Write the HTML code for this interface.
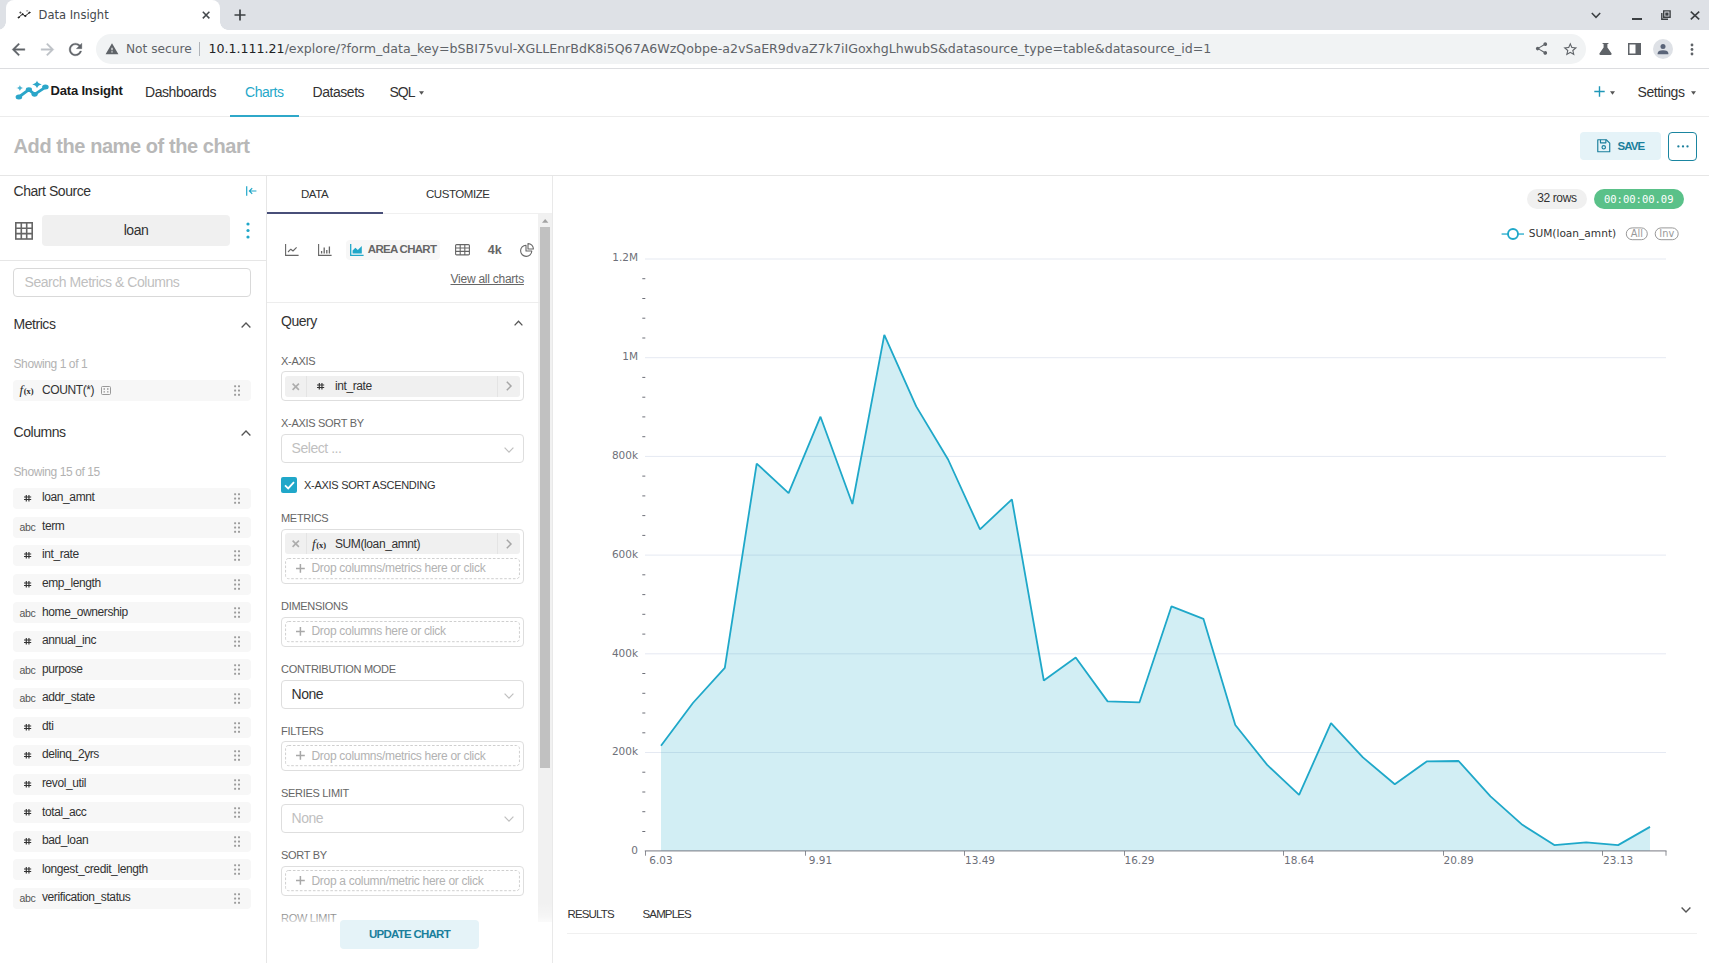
<!DOCTYPE html>
<html lang="en">
<head>
<meta charset="utf-8">
<title>Data Insight</title>
<style>
*{box-sizing:border-box;margin:0;padding:0}
html,body{width:1709px;height:963px;overflow:hidden;background:#fff}
body{position:relative;font-family:"Liberation Sans",sans-serif;color:#323232;font-size:14px}
.abs{position:absolute}
.dj{font-family:"DejaVu Sans","Liberation Sans",sans-serif}
svg{display:block;overflow:visible}
/* ---------- browser chrome ---------- */
#tabstrip{left:0;top:0;width:1709px;height:30px;background:#dee1e6}
#tab{left:6px;top:0;width:214px;height:30px;background:#fff;border-radius:8px 8px 0 0}
#tab:before,#tab:after{content:"";position:absolute;bottom:0;width:8px;height:8px}
#tab:before{left:-8px;background:radial-gradient(circle at 0 0,#dee1e6 7.5px,#fff 8px)}
#tab:after{right:-8px;background:radial-gradient(circle at 100% 0,#dee1e6 7.5px,#fff 8px)}
#toolbar{left:0;top:30px;width:1709px;height:39px;background:#fff;border-bottom:1px solid #dcdde0}
#omni{left:96px;top:34px;width:1490px;height:30px;border-radius:15px;background:#f1f3f4}
.ct{font-size:13px;white-space:nowrap;line-height:16px}
/* ---------- app nav ---------- */
#nav{left:0;top:69px;width:1709px;height:48px;border-bottom:1px solid #ececec;background:#fff}
.navi{top:84.4px;font-size:14px;line-height:16px;color:#323232;white-space:nowrap;letter-spacing:-.45px}
/* ---------- title row ---------- */
#titlerow{left:0;top:117px;width:1709px;height:59px;border-bottom:1px solid #e6e6e6;background:#fff}
/* ---------- shared text ---------- */
.t14{font-size:14px;line-height:16px;letter-spacing:-.45px;white-space:nowrap;color:#323232}
.t12{font-size:12px;line-height:14px;letter-spacing:-.4px;white-space:nowrap;color:#323232}
.up{font-size:11.5px;line-height:14px;letter-spacing:-.58px;white-space:nowrap;color:#323232}
/* ---------- left panel ---------- */
.row{left:13px;width:238.4px;height:21px;border-radius:4px;background:#f7f7f7}
.rt{left:42px}
.abc{left:19.5px;font-size:10.5px;line-height:12px;letter-spacing:-.3px;color:#555;white-space:nowrap}
/* ---------- middle panel ---------- */
.lbl{left:281px;color:#666}
.box{left:281px;width:243px;border:1px solid #dedede;border-radius:4px;background:#fff}
.chip{left:285px;width:235px;height:21.5px;border-radius:3px;background:#f0f0f0}
.drop{left:285px;width:235px;height:21px;border:1px dashed #d4d4d4;border-radius:3px}
.ph{left:311.5px;font-size:12px;line-height:14px;letter-spacing:-.3px;color:#b2b2b2;white-space:nowrap}
</style>
</head>
<body>

<!-- ===== BROWSER CHROME ===== -->
<div id="tabstrip" class="abs"></div>
<div id="tab" class="abs"></div>
<div id="toolbar" class="abs"></div>
<div id="omni" class="abs"></div>
<div class="abs dj ct" style="left:38.6px;top:7px;color:#45494d;font-size:11.5px">Data Insight</div>
<div class="abs dj ct" style="left:126px;top:41.4px;color:#5f6368;font-size:12.2px">Not secure</div>
<div class="abs" style="left:199px;top:42px;width:1px;height:14px;background:#b0b4b9"></div>
<div class="abs dj ct" style="left:208.5px;top:41.4px;color:#5f6368;font-size:12.6px"><span style="color:#202124">10.1.111.21</span>/explore/?form_data_key=bSBI75vul-XGLLEnrBdK8i5Q67A6WzQobpe-a2vSaER9dvaZ7k7iIGoxhgLhwubS&amp;datasource_type=table&amp;datasource_id=1</div>
<svg class="abs" style="left:17px;top:10px" width="14" height="10" viewBox="0 0 14 10" fill="none" stroke="#222" stroke-width="1" stroke-linecap="round" stroke-linejoin="round"><path d="M1.5 7.5 L5.5 4.2 L8.2 6 L12.5 2.6"/><circle cx="1.6" cy="7.5" r=".55" fill="#222"/><circle cx="5.5" cy="4.2" r=".55" fill="#222"/><circle cx="8.2" cy="6" r=".55" fill="#222"/><circle cx="12.4" cy="2.6" r=".55" fill="#222"/><path d="M2.6 2.6 h1.6 M3.4 1.8 v1.6 M9.6 .9 h1.2" stroke-width=".6"/></svg>
<svg class="abs" style="left:201px;top:10.2px" width="10" height="10" viewBox="0 0 10 10" stroke="#45494d" stroke-width="1.5" fill="none"><path d="M1.8 1.8 L8.4 8.4 M8.4 1.8 L1.8 8.4"/></svg>
<svg class="abs" style="left:233.6px;top:9px" width="12" height="12" viewBox="0 0 12 12" stroke="#3c4043" stroke-width="1.7" fill="none"><path d="M6 0.5 V11.5 M0.5 6 H11.5"/></svg>
<svg class="abs" style="left:9px;top:39.5px" width="19" height="19" viewBox="0 0 24 24" fill="#5f6368" stroke="#5f6368" stroke-width="0.5"><path d="M20 11H7.83l5.59-5.59L12 4l-8 8 8 8 1.41-1.41L7.83 13H20v-2z"/></svg>
<svg class="abs" style="left:37.8px;top:39.5px" width="19" height="19" viewBox="0 0 24 24" fill="#bdc1c6" stroke="#bdc1c6" stroke-width="0.5"><path d="M12 4l-1.41 1.41L16.17 11H4v2h12.17l-5.58 5.59L12 20l8-8z"/></svg>
<svg class="abs" style="left:66px;top:39.5px" width="19" height="19" viewBox="0 0 24 24" fill="#5f6368" stroke="#5f6368" stroke-width="0.4"><path d="M17.65 6.35C16.2 4.9 14.21 4 12 4c-4.42 0-7.99 3.58-7.99 8s3.57 8 7.99 8c3.73 0 6.84-2.55 7.73-6h-2.08c-.82 2.33-3.04 4-5.65 4-3.31 0-6-2.69-6-6s2.69-6 6-6c1.66 0 3.14.69 4.22 1.78L13 11h7V4l-2.35 2.35z"/></svg>
<svg class="abs" style="left:104.5px;top:42px" width="14" height="14" viewBox="0 0 24 24" fill="#5f6368" stroke="#5f6368" stroke-width="0"><path d="M1 21h22L12 2 1 21zm12-3h-2v-2h2v2zm0-4h-2v-4h2v4z"/></svg>
<svg class="abs" style="left:1533.5px;top:41.3px" width="15" height="15" viewBox="0 0 24 24" fill="#5f6368" stroke="#5f6368" stroke-width="0"><path d="M18 16.08c-.76 0-1.44.3-1.96.77L8.91 12.7c.05-.23.09-.46.09-.7s-.04-.47-.09-.7l7.05-4.11c.54.5 1.25.81 2.04.81 1.66 0 3-1.34 3-3s-1.34-3-3-3-3 1.34-3 3c0 .24.04.47.09.7L8.04 9.81C7.5 9.31 6.79 9 6 9c-1.66 0-3 1.34-3 3s1.34 3 3 3c.79 0 1.5-.31 2.04-.81l7.12 4.16c-.05.21-.08.43-.08.65 0 1.61 1.31 2.92 2.92 2.92s2.92-1.31 2.92-2.92-1.31-2.92-2.92-2.92z"/></svg>
<svg class="abs" style="left:1561.9px;top:40.6px" width="16.6" height="16.6" viewBox="0 0 24 24" fill="#5f6368" stroke="#5f6368" stroke-width="0"><path d="M22 9.24l-7.19-.62L12 2 9.19 8.63 2 9.24l5.46 4.73L5.82 21 12 17.27 18.18 21l-1.63-7.03L22 9.24zM12 15.4l-3.76 2.27 1-4.28-3.32-2.88 4.38-.38L12 6.1l1.71 4.04 4.38.38-3.32 2.88 1 4.28L12 15.4z"/></svg>
<svg class="abs" style="left:1599px;top:43px" width="13" height="12" viewBox="0 0 13 12" fill="#5f6368"><path d="M3.6 0 H9.4 V1 H8.4 V4.6 L12.6 10.6 Q13 12 11.6 12 H1.4 Q0 12 .4 10.6 L4.6 4.6 V1 H3.6 Z"/></svg>
<svg class="abs" style="left:1628px;top:43px" width="13" height="12" viewBox="0 0 13 12"><rect x=".75" y=".75" width="11.5" height="10.5" fill="none" stroke="#5f6368" stroke-width="1.5"/><rect x="7.5" y="0" width="5.5" height="12" fill="#5f6368"/></svg>
<svg class="abs" style="left:1653px;top:39px" width="20" height="20" viewBox="0 0 20 20"><circle cx="10" cy="10" r="10" fill="#dee1e6"/><circle cx="10" cy="7.4" r="2.5" fill="#5a6478"/><path d="M4.6 14.6 Q4.6 11.2 10 11.2 Q15.4 11.2 15.4 14.6 V15.2 H4.6 Z" fill="#5a6478"/></svg>
<svg class="abs" style="left:1690px;top:43px" width="4" height="13" viewBox="0 0 4 13" fill="#5f6368"><circle cx="2" cy="2" r="1.4"/><circle cx="2" cy="6.5" r="1.4"/><circle cx="2" cy="11" r="1.4"/></svg>
<svg class="abs" style="left:1591px;top:12px" width="10" height="7" viewBox="0 0 10 7" stroke="#3c4043" stroke-width="1.5" fill="none"><path d="M.8 .9 L5 5.3 L9.2 .9"/></svg>
<div class="abs" style="left:1632.3px;top:18px;width:9.5px;height:1.8px;background:#3c4043"></div>
<svg class="abs" style="left:1661px;top:10px" width="10" height="10" viewBox="0 0 10 10" stroke="#3c4043" stroke-width="1.4" fill="none"><path d="M2.7 .9 H9.1 V7.3 H2.7 Z M.8 3 V9.2 H7"/><rect x="4.3" y="2.5" width="3.2" height="3.2" fill="#3c4043" stroke="none"/></svg>
<svg class="abs" style="left:1690px;top:11px" width="10" height="9" viewBox="0 0 10 9" stroke="#3c4043" stroke-width="1.6" fill="none"><path d="M.8 .6 L9.2 8.4 M9.2 .6 L.8 8.4"/></svg>


<!-- ===== APP NAV ===== -->
<div id="nav" class="abs"></div>
<div class="abs" style="left:50.5px;top:82.5px;font-weight:bold;font-size:13px;line-height:16px;color:#1a1a1a;letter-spacing:-0.18px;white-space:nowrap">Data Insight</div>
<div class="abs navi" style="left:145px">Dashboards</div>
<div class="abs navi" style="left:245px;color:#1fa8c9">Charts</div>
<div class="abs" style="left:230px;top:115px;width:68.5px;height:2px;background:#2fa8c9"></div>
<div class="abs navi" style="left:312.5px">Datasets</div>
<div class="abs navi" style="left:389.5px;letter-spacing:-1px">SQL</div>
<div class="abs navi" style="left:1637.5px">Settings</div>
<svg class="abs" style="left:14px;top:80px" width="36" height="21" viewBox="0 0 36 21"><g stroke="#2ba6c9" stroke-width="2.8" stroke-linecap="round" stroke-linejoin="round" fill="none"><path d="M4.9 17 L14.9 9.6 L20.6 14.3 L31.6 7.1"/></g><g fill="#2ba6c9"><ellipse cx="4.9" cy="17" rx="3.3" ry="2.5"/><ellipse cx="14.9" cy="9.6" rx="3.1" ry="2.4"/><ellipse cx="20.6" cy="14.3" rx="3.1" ry="2.4"/><ellipse cx="31.4" cy="7.1" rx="3.3" ry="2.5"/><path d="M23 .6 Q23.7 3.7 27.8 4.4 Q23.7 5.1 23 8.2 Q22.3 5.1 18.2 4.4 Q22.3 3.7 23 .6Z"/><path d="M5.9 5 Q6.3 7.7 9.6 8.1 Q6.3 8.5 5.9 11.2 Q5.5 8.5 2.2 8.1 Q5.5 7.7 5.9 5Z" opacity=".85"/></g></svg>
<svg class="abs" style="left:418.5px;top:90.8px" width="5" height="4" viewBox="0 0 5 4" fill="#555"><path d="M0 .3 H5 L2.5 3.7Z"/></svg>
<svg class="abs" style="left:1609.5px;top:90.8px" width="5" height="4" viewBox="0 0 5 4" fill="#555"><path d="M0 .3 H5 L2.5 3.7Z"/></svg>
<svg class="abs" style="left:1691px;top:90.8px" width="5" height="4" viewBox="0 0 5 4" fill="#555"><path d="M0 .3 H5 L2.5 3.7Z"/></svg>
<svg class="abs" style="left:1594.2px;top:86.2px" width="11" height="11" viewBox="0 0 11 11" stroke="#1f97b8" stroke-width="1.4" fill="none"><path d="M5.5 .3 V10.7 M.3 5.5 H10.7"/></svg>


<!-- ===== TITLE ROW ===== -->
<div id="titlerow" class="abs"></div>
<div class="abs" style="left:13.6px;top:134.7px;font-size:20px;line-height:22px;font-weight:bold;color:#b8b8b8;letter-spacing:-.43px;white-space:nowrap">Add the name of the chart</div>
<div class="abs" style="left:1580px;top:132px;width:81px;height:28px;border-radius:4px;background:#e5f3f8"></div>
<svg class="abs" style="left:1596.5px;top:138.5px" width="13.5" height="13.5" viewBox="0 0 14 14" fill="none" stroke="#1a7f9c" stroke-width="1.2" stroke-linejoin="round"><path d="M.8 .8 H9.6 L13.2 4.2 V13.2 H.8 Z"/><path d="M3.6 .8 V4 H9.2 V.8"/><circle cx="7" cy="8.6" r="1.8"/></svg>
<div class="abs" style="left:1617.5px;top:139px;font-size:11.5px;line-height:14px;font-weight:bold;color:#1a7f9c;letter-spacing:-.9px;white-space:nowrap">SAVE</div>
<div class="abs" style="left:1668px;top:132px;width:29px;height:28.5px;border-radius:4px;border:1px solid #1a85a0;background:#fff"></div>
<svg class="abs" style="left:1676.5px;top:145px" width="12" height="3" viewBox="0 0 12 3" fill="#1a7f9c"><circle cx="1.4" cy="1.4" r="1.15"/><circle cx="6" cy="1.4" r="1.15"/><circle cx="10.5" cy="1.4" r="1.15"/></svg>


<!-- ===== LEFT PANEL ===== -->
<div class="abs" style="left:265.6px;top:176px;width:1px;height:787px;background:#e6e6e6"></div>
<div class="abs t14" style="left:13.5px;top:182.8px">Chart Source</div>
<svg class="abs" style="left:246px;top:186px" width="11" height="10" viewBox="0 0 11 10" fill="none" stroke="#20a7c9" stroke-width="1.2"><path d="M.7 .2 V9.8 M10.4 5 H3.4 M6.2 2.2 L3.4 5 L6.2 7.8"/></svg>
<svg class="abs" style="left:15px;top:221.5px" width="18" height="18" viewBox="0 0 18 18" fill="none" stroke="#666" stroke-width="1.6"><rect x=".8" y=".8" width="16.4" height="16.2"/><path d="M6.3 .8 V17 M11.7 .8 V17 M.8 6.2 H17.2 M.8 11.6 H17.2"/></svg>
<div class="abs" style="left:42px;top:215px;width:188px;height:31px;border-radius:4px;background:#f0f0f0"></div>
<div class="abs t14" style="left:42px;top:222px;width:188px;text-align:center">loan</div>
<svg class="abs" style="left:246px;top:221.5px" width="4" height="17" viewBox="0 0 4 17" fill="#20a7c9"><circle cx="2" cy="2" r="1.6"/><circle cx="2" cy="8.5" r="1.6"/><circle cx="2" cy="15" r="1.6"/></svg>
<div class="abs" style="left:0;top:260px;width:266px;height:1px;background:#e6e6e6"></div>
<div class="abs" style="left:13px;top:268px;width:238.4px;height:29px;border:1px solid #d9d9d9;border-radius:4px;background:#fff"></div>
<div class="abs t14" style="left:24.5px;top:274px;color:#bfbfbf">Search Metrics &amp; Columns</div>
<div class="abs t14" style="left:13.5px;top:315.8px">Metrics</div>
<svg class="abs" style="left:241px;top:321.5px" width="10" height="6" viewBox="0 0 10 6" fill="none" stroke="#555" stroke-width="1.3"><path d="M.6 5.5 L5 1 L9.4 5.5"/></svg>
<div class="abs t12" style="left:13.5px;top:356.5px;color:#b2b2b2">Showing 1 of 1</div>
<div class="abs row" style="top:379.8px"></div>
<div class="abs" style="left:19.5px;top:382.8px;font-family:'Liberation Serif',serif;font-style:italic;font-size:13px;line-height:14px;color:#2a2a2a;white-space:nowrap">f<span style="font-size:8.5px;font-style:normal;font-weight:bold;letter-spacing:0;margin-left:.6px">(x)</span></div>
<div class="abs t12 rt" style="top:382.8px">COUNT(*)</div>
<svg class="abs" style="left:101px;top:385.8px" width="10" height="9" viewBox="0 0 10 9" fill="none" stroke="#999" stroke-width="1"><rect x=".5" y=".5" width="9" height="8" rx="1"/><path d="M2.5 3 H4 M2.5 5.8 H4 M6 3 H7.5 M6 5.8 H7.5" stroke-width="1.3"/></svg>
<svg class="abs" style="left:233px;top:384.8px" width="8" height="11" viewBox="0 0 8 11" fill="#9c9c9c"><rect x="1.1" y="0.2" width="2" height="2" rx=".6"/><rect x="1.1" y="4.5" width="2" height="2" rx=".6"/><rect x="1.1" y="8.8" width="2" height="2" rx=".6"/><rect x="5.0" y="0.2" width="2" height="2" rx=".6"/><rect x="5.0" y="4.5" width="2" height="2" rx=".6"/><rect x="5.0" y="8.8" width="2" height="2" rx=".6"/></svg>
<div class="abs t14" style="left:13.5px;top:423.8px">Columns</div>
<svg class="abs" style="left:241px;top:429.5px" width="10" height="6" viewBox="0 0 10 6" fill="none" stroke="#555" stroke-width="1.3"><path d="M.6 5.5 L5 1 L9.4 5.5"/></svg>
<div class="abs t12" style="left:13.5px;top:464.6px;color:#b2b2b2">Showing 15 of 15</div>
<div class="abs row" style="top:488.0px"></div>
<svg class="abs" style="left:24.0px;top:495.2px" width="7.2" height="6.6" viewBox="0 0 7.2 6.6" fill="none" stroke="#333" stroke-width="1.15"><path d="M2.3 0 V6.6 M4.95 0 V6.6 M0 2.05 H7.2 M0 4.55 H7.2"/></svg>
<div class="abs t12 rt" style="top:490.3px">loan_amnt</div>
<svg class="abs" style="left:233px;top:493.0px" width="8" height="11" viewBox="0 0 8 11" fill="#9c9c9c"><rect x="1.1" y="0.2" width="2" height="2" rx=".6"/><rect x="1.1" y="4.5" width="2" height="2" rx=".6"/><rect x="1.1" y="8.8" width="2" height="2" rx=".6"/><rect x="5.0" y="0.2" width="2" height="2" rx=".6"/><rect x="5.0" y="4.5" width="2" height="2" rx=".6"/><rect x="5.0" y="8.8" width="2" height="2" rx=".6"/></svg>
<div class="abs row" style="top:516.6px"></div>
<div class="abs abc" style="top:520.9px">abc</div>
<div class="abs t12 rt" style="top:518.9px">term</div>
<svg class="abs" style="left:233px;top:521.6px" width="8" height="11" viewBox="0 0 8 11" fill="#9c9c9c"><rect x="1.1" y="0.2" width="2" height="2" rx=".6"/><rect x="1.1" y="4.5" width="2" height="2" rx=".6"/><rect x="1.1" y="8.8" width="2" height="2" rx=".6"/><rect x="5.0" y="0.2" width="2" height="2" rx=".6"/><rect x="5.0" y="4.5" width="2" height="2" rx=".6"/><rect x="5.0" y="8.8" width="2" height="2" rx=".6"/></svg>
<div class="abs row" style="top:545.1px"></div>
<svg class="abs" style="left:24.0px;top:552.3px" width="7.2" height="6.6" viewBox="0 0 7.2 6.6" fill="none" stroke="#333" stroke-width="1.15"><path d="M2.3 0 V6.6 M4.95 0 V6.6 M0 2.05 H7.2 M0 4.55 H7.2"/></svg>
<div class="abs t12 rt" style="top:547.4px">int_rate</div>
<svg class="abs" style="left:233px;top:550.1px" width="8" height="11" viewBox="0 0 8 11" fill="#9c9c9c"><rect x="1.1" y="0.2" width="2" height="2" rx=".6"/><rect x="1.1" y="4.5" width="2" height="2" rx=".6"/><rect x="1.1" y="8.8" width="2" height="2" rx=".6"/><rect x="5.0" y="0.2" width="2" height="2" rx=".6"/><rect x="5.0" y="4.5" width="2" height="2" rx=".6"/><rect x="5.0" y="8.8" width="2" height="2" rx=".6"/></svg>
<div class="abs row" style="top:573.7px"></div>
<svg class="abs" style="left:24.0px;top:580.9px" width="7.2" height="6.6" viewBox="0 0 7.2 6.6" fill="none" stroke="#333" stroke-width="1.15"><path d="M2.3 0 V6.6 M4.95 0 V6.6 M0 2.05 H7.2 M0 4.55 H7.2"/></svg>
<div class="abs t12 rt" style="top:576.0px">emp_length</div>
<svg class="abs" style="left:233px;top:578.7px" width="8" height="11" viewBox="0 0 8 11" fill="#9c9c9c"><rect x="1.1" y="0.2" width="2" height="2" rx=".6"/><rect x="1.1" y="4.5" width="2" height="2" rx=".6"/><rect x="1.1" y="8.8" width="2" height="2" rx=".6"/><rect x="5.0" y="0.2" width="2" height="2" rx=".6"/><rect x="5.0" y="4.5" width="2" height="2" rx=".6"/><rect x="5.0" y="8.8" width="2" height="2" rx=".6"/></svg>
<div class="abs row" style="top:602.2px"></div>
<div class="abs abc" style="top:606.5px">abc</div>
<div class="abs t12 rt" style="top:604.5px">home_ownership</div>
<svg class="abs" style="left:233px;top:607.2px" width="8" height="11" viewBox="0 0 8 11" fill="#9c9c9c"><rect x="1.1" y="0.2" width="2" height="2" rx=".6"/><rect x="1.1" y="4.5" width="2" height="2" rx=".6"/><rect x="1.1" y="8.8" width="2" height="2" rx=".6"/><rect x="5.0" y="0.2" width="2" height="2" rx=".6"/><rect x="5.0" y="4.5" width="2" height="2" rx=".6"/><rect x="5.0" y="8.8" width="2" height="2" rx=".6"/></svg>
<div class="abs row" style="top:630.8px"></div>
<svg class="abs" style="left:24.0px;top:638.0px" width="7.2" height="6.6" viewBox="0 0 7.2 6.6" fill="none" stroke="#333" stroke-width="1.15"><path d="M2.3 0 V6.6 M4.95 0 V6.6 M0 2.05 H7.2 M0 4.55 H7.2"/></svg>
<div class="abs t12 rt" style="top:633.1px">annual_inc</div>
<svg class="abs" style="left:233px;top:635.8px" width="8" height="11" viewBox="0 0 8 11" fill="#9c9c9c"><rect x="1.1" y="0.2" width="2" height="2" rx=".6"/><rect x="1.1" y="4.5" width="2" height="2" rx=".6"/><rect x="1.1" y="8.8" width="2" height="2" rx=".6"/><rect x="5.0" y="0.2" width="2" height="2" rx=".6"/><rect x="5.0" y="4.5" width="2" height="2" rx=".6"/><rect x="5.0" y="8.8" width="2" height="2" rx=".6"/></svg>
<div class="abs row" style="top:659.4px"></div>
<div class="abs abc" style="top:663.7px">abc</div>
<div class="abs t12 rt" style="top:661.7px">purpose</div>
<svg class="abs" style="left:233px;top:664.4px" width="8" height="11" viewBox="0 0 8 11" fill="#9c9c9c"><rect x="1.1" y="0.2" width="2" height="2" rx=".6"/><rect x="1.1" y="4.5" width="2" height="2" rx=".6"/><rect x="1.1" y="8.8" width="2" height="2" rx=".6"/><rect x="5.0" y="0.2" width="2" height="2" rx=".6"/><rect x="5.0" y="4.5" width="2" height="2" rx=".6"/><rect x="5.0" y="8.8" width="2" height="2" rx=".6"/></svg>
<div class="abs row" style="top:687.9px"></div>
<div class="abs abc" style="top:692.2px">abc</div>
<div class="abs t12 rt" style="top:690.2px">addr_state</div>
<svg class="abs" style="left:233px;top:692.9px" width="8" height="11" viewBox="0 0 8 11" fill="#9c9c9c"><rect x="1.1" y="0.2" width="2" height="2" rx=".6"/><rect x="1.1" y="4.5" width="2" height="2" rx=".6"/><rect x="1.1" y="8.8" width="2" height="2" rx=".6"/><rect x="5.0" y="0.2" width="2" height="2" rx=".6"/><rect x="5.0" y="4.5" width="2" height="2" rx=".6"/><rect x="5.0" y="8.8" width="2" height="2" rx=".6"/></svg>
<div class="abs row" style="top:716.5px"></div>
<svg class="abs" style="left:24.0px;top:723.7px" width="7.2" height="6.6" viewBox="0 0 7.2 6.6" fill="none" stroke="#333" stroke-width="1.15"><path d="M2.3 0 V6.6 M4.95 0 V6.6 M0 2.05 H7.2 M0 4.55 H7.2"/></svg>
<div class="abs t12 rt" style="top:718.8px">dti</div>
<svg class="abs" style="left:233px;top:721.5px" width="8" height="11" viewBox="0 0 8 11" fill="#9c9c9c"><rect x="1.1" y="0.2" width="2" height="2" rx=".6"/><rect x="1.1" y="4.5" width="2" height="2" rx=".6"/><rect x="1.1" y="8.8" width="2" height="2" rx=".6"/><rect x="5.0" y="0.2" width="2" height="2" rx=".6"/><rect x="5.0" y="4.5" width="2" height="2" rx=".6"/><rect x="5.0" y="8.8" width="2" height="2" rx=".6"/></svg>
<div class="abs row" style="top:745.0px"></div>
<svg class="abs" style="left:24.0px;top:752.2px" width="7.2" height="6.6" viewBox="0 0 7.2 6.6" fill="none" stroke="#333" stroke-width="1.15"><path d="M2.3 0 V6.6 M4.95 0 V6.6 M0 2.05 H7.2 M0 4.55 H7.2"/></svg>
<div class="abs t12 rt" style="top:747.3px">delinq_2yrs</div>
<svg class="abs" style="left:233px;top:750.0px" width="8" height="11" viewBox="0 0 8 11" fill="#9c9c9c"><rect x="1.1" y="0.2" width="2" height="2" rx=".6"/><rect x="1.1" y="4.5" width="2" height="2" rx=".6"/><rect x="1.1" y="8.8" width="2" height="2" rx=".6"/><rect x="5.0" y="0.2" width="2" height="2" rx=".6"/><rect x="5.0" y="4.5" width="2" height="2" rx=".6"/><rect x="5.0" y="8.8" width="2" height="2" rx=".6"/></svg>
<div class="abs row" style="top:773.6px"></div>
<svg class="abs" style="left:24.0px;top:780.8px" width="7.2" height="6.6" viewBox="0 0 7.2 6.6" fill="none" stroke="#333" stroke-width="1.15"><path d="M2.3 0 V6.6 M4.95 0 V6.6 M0 2.05 H7.2 M0 4.55 H7.2"/></svg>
<div class="abs t12 rt" style="top:775.9px">revol_util</div>
<svg class="abs" style="left:233px;top:778.6px" width="8" height="11" viewBox="0 0 8 11" fill="#9c9c9c"><rect x="1.1" y="0.2" width="2" height="2" rx=".6"/><rect x="1.1" y="4.5" width="2" height="2" rx=".6"/><rect x="1.1" y="8.8" width="2" height="2" rx=".6"/><rect x="5.0" y="0.2" width="2" height="2" rx=".6"/><rect x="5.0" y="4.5" width="2" height="2" rx=".6"/><rect x="5.0" y="8.8" width="2" height="2" rx=".6"/></svg>
<div class="abs row" style="top:802.2px"></div>
<svg class="abs" style="left:24.0px;top:809.4px" width="7.2" height="6.6" viewBox="0 0 7.2 6.6" fill="none" stroke="#333" stroke-width="1.15"><path d="M2.3 0 V6.6 M4.95 0 V6.6 M0 2.05 H7.2 M0 4.55 H7.2"/></svg>
<div class="abs t12 rt" style="top:804.5px">total_acc</div>
<svg class="abs" style="left:233px;top:807.2px" width="8" height="11" viewBox="0 0 8 11" fill="#9c9c9c"><rect x="1.1" y="0.2" width="2" height="2" rx=".6"/><rect x="1.1" y="4.5" width="2" height="2" rx=".6"/><rect x="1.1" y="8.8" width="2" height="2" rx=".6"/><rect x="5.0" y="0.2" width="2" height="2" rx=".6"/><rect x="5.0" y="4.5" width="2" height="2" rx=".6"/><rect x="5.0" y="8.8" width="2" height="2" rx=".6"/></svg>
<div class="abs row" style="top:830.7px"></div>
<svg class="abs" style="left:24.0px;top:837.9px" width="7.2" height="6.6" viewBox="0 0 7.2 6.6" fill="none" stroke="#333" stroke-width="1.15"><path d="M2.3 0 V6.6 M4.95 0 V6.6 M0 2.05 H7.2 M0 4.55 H7.2"/></svg>
<div class="abs t12 rt" style="top:833.0px">bad_loan</div>
<svg class="abs" style="left:233px;top:835.7px" width="8" height="11" viewBox="0 0 8 11" fill="#9c9c9c"><rect x="1.1" y="0.2" width="2" height="2" rx=".6"/><rect x="1.1" y="4.5" width="2" height="2" rx=".6"/><rect x="1.1" y="8.8" width="2" height="2" rx=".6"/><rect x="5.0" y="0.2" width="2" height="2" rx=".6"/><rect x="5.0" y="4.5" width="2" height="2" rx=".6"/><rect x="5.0" y="8.8" width="2" height="2" rx=".6"/></svg>
<div class="abs row" style="top:859.3px"></div>
<svg class="abs" style="left:24.0px;top:866.5px" width="7.2" height="6.6" viewBox="0 0 7.2 6.6" fill="none" stroke="#333" stroke-width="1.15"><path d="M2.3 0 V6.6 M4.95 0 V6.6 M0 2.05 H7.2 M0 4.55 H7.2"/></svg>
<div class="abs t12 rt" style="top:861.6px">longest_credit_length</div>
<svg class="abs" style="left:233px;top:864.3px" width="8" height="11" viewBox="0 0 8 11" fill="#9c9c9c"><rect x="1.1" y="0.2" width="2" height="2" rx=".6"/><rect x="1.1" y="4.5" width="2" height="2" rx=".6"/><rect x="1.1" y="8.8" width="2" height="2" rx=".6"/><rect x="5.0" y="0.2" width="2" height="2" rx=".6"/><rect x="5.0" y="4.5" width="2" height="2" rx=".6"/><rect x="5.0" y="8.8" width="2" height="2" rx=".6"/></svg>
<div class="abs row" style="top:887.8px"></div>
<div class="abs abc" style="top:892.1px">abc</div>
<div class="abs t12 rt" style="top:890.1px">verification_status</div>
<svg class="abs" style="left:233px;top:892.8px" width="8" height="11" viewBox="0 0 8 11" fill="#9c9c9c"><rect x="1.1" y="0.2" width="2" height="2" rx=".6"/><rect x="1.1" y="4.5" width="2" height="2" rx=".6"/><rect x="1.1" y="8.8" width="2" height="2" rx=".6"/><rect x="5.0" y="0.2" width="2" height="2" rx=".6"/><rect x="5.0" y="4.5" width="2" height="2" rx=".6"/><rect x="5.0" y="8.8" width="2" height="2" rx=".6"/></svg>


<!-- ===== MIDDLE PANEL ===== -->
<div class="abs" style="left:267px;top:213px;width:285px;height:1px;background:#f0f0f0"></div>
<div class="abs" style="left:266.6px;top:212px;width:116px;height:2px;background:#484f79"></div>
<div class="abs up" style="left:301px;top:187.2px;font-size:11.5px;letter-spacing:-.45px">DATA</div>
<div class="abs up" style="left:426px;top:187.2px;font-size:11.5px;letter-spacing:-.45px">CUSTOMIZE</div>
<div class="abs" style="left:552px;top:176px;width:1px;height:787px;background:#e9e9e9"></div>
<div class="abs" style="left:538.3px;top:213.5px;width:13.7px;height:708.5px;background:#f1f1f1"></div>
<div class="abs" style="left:540px;top:227px;width:10px;height:541px;background:#c1c1c1"></div>
<svg class="abs" style="left:541.9px;top:219.2px" width="6.4" height="3.8" viewBox="0 0 7 4" fill="#a3a3a3"><path d="M0 4 L3.5 0 L7 4Z"/></svg>
<svg class="abs" style="left:284.5px;top:243.5px" width="14" height="12" viewBox="0 0 14 12" fill="none" stroke="#666" stroke-width="1.1"><path d="M.6 0 V11.4 H13.6"/><path d="M3 8 L5.8 5.2 L8 7 L11.6 3.4" stroke-linejoin="round"/></svg>
<svg class="abs" style="left:317.5px;top:243.5px" width="14" height="12" viewBox="0 0 14 12" fill="none" stroke="#666" stroke-width="1.1"><path d="M.6 0 V11.4 H13.6"/><path d="M3.6 9.6 V7 M6.2 9.6 V3.6 M8.8 9.6 V6 M11.4 9.6 V2.4" stroke-width="1.3"/></svg>
<div class="abs" style="left:346px;top:239.5px;width:94px;height:20.5px;border-radius:4px;background:#f7f7f7"></div>
<svg class="abs" style="left:349.5px;top:243.5px" width="14" height="12" viewBox="0 0 14 12"><path d="M.7 0 V11.3 H13.6" fill="none" stroke="#20a7c9" stroke-width="1.3"/><path d="M2.6 9.6 V6.6 L5.4 3.8 L7.8 6 L11.8 2 V9.6 Z" fill="#20a7c9"/></svg>
<div class="abs" style="left:367.8px;top:241.5px;font-size:11.5px;line-height:14px;font-weight:bold;color:#666;letter-spacing:-.72px;white-space:nowrap">AREA CHART</div>
<svg class="abs" style="left:454.5px;top:244px" width="15" height="11.5" viewBox="0 0 15 11.5" fill="none" stroke="#666" stroke-width="1.1"><rect x=".6" y=".6" width="13.8" height="10.3" rx="1"/><path d="M.6 4 H14.4 M.6 7.4 H14.4 M5.2 .6 V10.9 M9.8 .6 V10.9"/></svg>
<div class="abs" style="left:487.8px;top:243.3px;font-size:12.5px;line-height:14px;font-weight:bold;color:#666;letter-spacing:-.1px;white-space:nowrap">4k</div>
<svg class="abs" style="left:520px;top:242.5px" width="14" height="14" viewBox="0 0 14 14" fill="none" stroke="#666" stroke-width="1.1"><path d="M6 2.2 A5.6 5.6 0 1 0 11.8 8 H6 Z" stroke-linejoin="round"/><path d="M8 .6 A5.4 5.4 0 0 1 13.4 6 H8 Z" stroke-linejoin="round"/></svg>
<div class="abs t12" style="left:450.5px;top:272px;color:#666;text-decoration:underline;letter-spacing:-.25px">View all charts</div>
<div class="abs" style="left:267px;top:302px;width:272.6px;height:1px;background:#ededed"></div>
<div class="abs t14" style="left:281px;top:313px">Query</div>
<svg class="abs" style="left:513.5px;top:320px" width="9" height="6" viewBox="0 0 9 6" fill="none" stroke="#555" stroke-width="1.3"><path d="M.6 5.4 L4.5 1.2 L8.4 5.4"/></svg>
<div class="abs up lbl" style="top:354.35px;font-size:11px;letter-spacing:-.3px">X-AXIS</div>
<div class="abs box" style="top:371.3px;height:29.4px"></div>
<div class="abs chip" style="top:375.6px;height:21px"></div>
<svg class="abs" style="left:292px;top:382.5px" width="7.5" height="7.5" viewBox="0 0 7.5 7.5" stroke="#adadad" stroke-width="1.6" fill="none"><path d="M.6 .6 L6.9 6.9 M6.9 .6 L.6 6.9"/></svg>
<div class="abs" style="left:306px;top:375.6px;width:1px;height:21px;background:#e4e4e4"></div>
<div class="abs" style="left:497px;top:375.6px;width:1px;height:21px;background:#e4e4e4"></div>
<svg class="abs" style="left:505.5px;top:381.2px" width="6" height="10" viewBox="0 0 6 10" stroke="#a6a6a6" stroke-width="1.5" fill="none"><path d="M.8 .8 L5 5 L.8 9.2"/></svg>
<svg class="abs" style="left:317.2px;top:382.9px" width="7.2" height="6.6" viewBox="0 0 7.2 6.6" fill="none" stroke="#333" stroke-width="1.15"><path d="M2.3 0 V6.6 M4.95 0 V6.6 M0 2.05 H7.2 M0 4.55 H7.2"/></svg>
<div class="abs t12" style="left:335px;top:378.9px">int_rate</div>
<div class="abs up lbl" style="top:416.35px;font-size:11px;letter-spacing:-.3px">X-AXIS SORT BY</div>
<div class="abs box" style="top:434px;height:29px"></div>
<div class="abs t14" style="left:291.5px;top:440px;color:#bfbfbf">Select ...</div>
<svg class="abs" style="left:503.5px;top:446.5px" width="10" height="6" viewBox="0 0 10 6" fill="none" stroke="#bfbfbf" stroke-width="1.2"><path d="M.6 .6 L5 5.2 L9.4 .6"/></svg>
<div class="abs" style="left:281px;top:477px;width:16px;height:16px;border-radius:2px;background:#20a7c9"></div>
<svg class="abs" style="left:283.5px;top:480.5px" width="11" height="9" viewBox="0 0 11 9" fill="none" stroke="#fff" stroke-width="1.8"><path d="M1 4.4 L4.2 7.4 L10 1.2"/></svg>
<div class="abs up" style="left:304px;top:478.4px;font-size:11px;letter-spacing:-.28px">X-AXIS SORT ASCENDING</div>
<div class="abs up lbl" style="top:511.35px;font-size:11px;letter-spacing:-.3px">METRICS</div>
<div class="abs box" style="top:529.2px;height:54.4px"></div>
<div class="abs chip" style="top:533.3px;height:21px"></div>
<svg class="abs" style="left:292px;top:540.2px" width="7.5" height="7.5" viewBox="0 0 7.5 7.5" stroke="#adadad" stroke-width="1.6" fill="none"><path d="M.6 .6 L6.9 6.9 M6.9 .6 L.6 6.9"/></svg>
<div class="abs" style="left:306px;top:533.3px;width:1px;height:21px;background:#e4e4e4"></div>
<div class="abs" style="left:497px;top:533.3px;width:1px;height:21px;background:#e4e4e4"></div>
<svg class="abs" style="left:505.5px;top:538.9px" width="6" height="10" viewBox="0 0 6 10" stroke="#a6a6a6" stroke-width="1.5" fill="none"><path d="M.8 .8 L5 5 L.8 9.2"/></svg>
<div class="abs" style="left:312px;top:536.5px;font-family:'Liberation Serif',serif;font-style:italic;font-size:13px;line-height:14px;color:#2a2a2a;white-space:nowrap">f<span style="font-size:8.5px;font-style:normal;font-weight:bold;letter-spacing:0;margin-left:.6px">(x)</span></div>
<div class="abs t12" style="left:335px;top:536.6px">SUM(loan_amnt)</div>
<svg class="abs" style="left:285px;top:558.2px" width="235" height="21.2" viewBox="0 0 235 21.2" fill="none"><rect x=".5" y=".5" width="234" height="20.2" rx="3" stroke="#cfcfcf" stroke-width="1" stroke-dasharray="2.6 1.75"/></svg>
<svg class="abs" style="left:295.8px;top:563.9px" width="8.8" height="8.8" viewBox="0 0 8.8 8.8" stroke="#a8a8a8" stroke-width="1.5" fill="none"><path d="M4.4 0 V8.8 M0 4.4 H8.8"/></svg>
<div class="abs ph" style="top:561.4px">Drop columns/metrics here or click</div>
<div class="abs up lbl" style="top:599.35px;font-size:11px;letter-spacing:-.3px">DIMENSIONS</div>
<div class="abs box" style="top:617.3px;height:29.6px"></div>
<svg class="abs" style="left:285px;top:621.2px" width="235" height="21.2" viewBox="0 0 235 21.2" fill="none"><rect x=".5" y=".5" width="234" height="20.2" rx="3" stroke="#cfcfcf" stroke-width="1" stroke-dasharray="2.6 1.75"/></svg>
<svg class="abs" style="left:295.8px;top:626.9px" width="8.8" height="8.8" viewBox="0 0 8.8 8.8" stroke="#a8a8a8" stroke-width="1.5" fill="none"><path d="M4.4 0 V8.8 M0 4.4 H8.8"/></svg>
<div class="abs ph" style="top:624.4px">Drop columns here or click</div>
<div class="abs up lbl" style="top:662.35px;font-size:11px;letter-spacing:-.3px">CONTRIBUTION MODE</div>
<div class="abs box" style="top:680px;height:29px"></div>
<div class="abs t14" style="left:291.5px;top:686px">None</div>
<svg class="abs" style="left:503.5px;top:692.5px" width="10" height="6" viewBox="0 0 10 6" fill="none" stroke="#bfbfbf" stroke-width="1.2"><path d="M.6 .6 L5 5.2 L9.4 .6"/></svg>
<div class="abs up lbl" style="top:724.35px;font-size:11px;letter-spacing:-.3px">FILTERS</div>
<div class="abs box" style="top:741.3px;height:29.6px"></div>
<svg class="abs" style="left:285px;top:745.2px" width="235" height="21.2" viewBox="0 0 235 21.2" fill="none"><rect x=".5" y=".5" width="234" height="20.2" rx="3" stroke="#cfcfcf" stroke-width="1" stroke-dasharray="2.6 1.75"/></svg>
<svg class="abs" style="left:295.8px;top:750.9px" width="8.8" height="8.8" viewBox="0 0 8.8 8.8" stroke="#a8a8a8" stroke-width="1.5" fill="none"><path d="M4.4 0 V8.8 M0 4.4 H8.8"/></svg>
<div class="abs ph" style="top:749.2px">Drop columns/metrics here or click</div>
<div class="abs up lbl" style="top:785.95px;font-size:11px;letter-spacing:-.3px">SERIES LIMIT</div>
<div class="abs box" style="top:803.7px;height:29px"></div>
<div class="abs t14" style="left:291.5px;top:809.6px;color:#bfbfbf">None</div>
<svg class="abs" style="left:503.5px;top:816.0px" width="10" height="6" viewBox="0 0 10 6" fill="none" stroke="#bfbfbf" stroke-width="1.2"><path d="M.6 .6 L5 5.2 L9.4 .6"/></svg>
<div class="abs up lbl" style="top:847.85px;font-size:11px;letter-spacing:-.3px">SORT BY</div>
<div class="abs box" style="top:866.3px;height:29.6px"></div>
<svg class="abs" style="left:285px;top:870.2px" width="235" height="21.2" viewBox="0 0 235 21.2" fill="none"><rect x=".5" y=".5" width="234" height="20.2" rx="3" stroke="#cfcfcf" stroke-width="1" stroke-dasharray="2.6 1.75"/></svg>
<svg class="abs" style="left:295.8px;top:875.9px" width="8.8" height="8.8" viewBox="0 0 8.8 8.8" stroke="#a8a8a8" stroke-width="1.5" fill="none"><path d="M4.4 0 V8.8 M0 4.4 H8.8"/></svg>
<div class="abs ph" style="top:874.4px">Drop a column/metric here or click</div>
<div class="abs up lbl" style="top:910.65px;font-size:11px;letter-spacing:-.3px">ROW LIMIT</div>
<div class="abs" style="left:267px;top:903px;width:285px;height:19.5px;background:linear-gradient(rgba(255,255,255,0),rgba(255,255,255,.3) 60%,rgba(255,255,255,.75))"></div>
<div class="abs" style="left:267px;top:922.5px;width:285px;height:40.5px;background:#fff"></div>
<div class="abs" style="left:340px;top:920.3px;width:139px;height:28.3px;border-radius:4px;background:#e5f3f8"></div>
<div class="abs" style="left:340px;top:927.2px;width:139px;text-align:center;font-size:11.5px;line-height:14px;font-weight:bold;color:#1a7f9c;letter-spacing:-.75px;white-space:nowrap">UPDATE CHART</div>


<!-- ===== CHART PANEL ===== -->
<div class="abs" style="left:1526.8px;top:189px;width:60.2px;height:19.5px;border-radius:10px;background:#f0f0f0"></div>
<div class="abs t12" style="left:1526.8px;top:191.3px;width:60.2px;text-align:center">32 rows</div>
<div class="abs" style="left:1594px;top:189px;width:89.5px;height:19.5px;border-radius:10px;background:#5ac189"></div>
<div class="abs" style="left:1594px;top:191.6px;width:89.5px;text-align:center;font-family:'DejaVu Sans Mono','Liberation Mono',monospace;font-size:10.5px;line-height:14px;color:#fff;white-space:nowrap">00:00:00.09</div>
<svg id="chart" class="abs" style="left:0;top:0" width="1709" height="963" viewBox="0 0 1709 963" font-family="DejaVu Sans, Liberation Sans, sans-serif">
<rect x="645" y="258.5" width="1021" height="1" fill="#e5e9f2"/>
<rect x="645" y="357.2" width="1021" height="1" fill="#e5e9f2"/>
<rect x="645" y="455.9" width="1021" height="1" fill="#e5e9f2"/>
<rect x="645" y="554.6" width="1021" height="1" fill="#e5e9f2"/>
<rect x="645" y="653.3" width="1021" height="1" fill="#e5e9f2"/>
<rect x="645" y="752.0" width="1021" height="1" fill="#e5e9f2"/>
<rect x="642.3" y="831.0" width="3" height="1" fill="#6e7079"/>
<rect x="642.3" y="811.2" width="3" height="1" fill="#6e7079"/>
<rect x="642.3" y="791.5" width="3" height="1" fill="#6e7079"/>
<rect x="642.3" y="771.7" width="3" height="1" fill="#6e7079"/>
<rect x="642.3" y="732.3" width="3" height="1" fill="#6e7079"/>
<rect x="642.3" y="712.5" width="3" height="1" fill="#6e7079"/>
<rect x="642.3" y="692.8" width="3" height="1" fill="#6e7079"/>
<rect x="642.3" y="673.0" width="3" height="1" fill="#6e7079"/>
<rect x="642.3" y="633.6" width="3" height="1" fill="#6e7079"/>
<rect x="642.3" y="613.8" width="3" height="1" fill="#6e7079"/>
<rect x="642.3" y="594.1" width="3" height="1" fill="#6e7079"/>
<rect x="642.3" y="574.3" width="3" height="1" fill="#6e7079"/>
<rect x="642.3" y="534.9" width="3" height="1" fill="#6e7079"/>
<rect x="642.3" y="515.1" width="3" height="1" fill="#6e7079"/>
<rect x="642.3" y="495.4" width="3" height="1" fill="#6e7079"/>
<rect x="642.3" y="475.6" width="3" height="1" fill="#6e7079"/>
<rect x="642.3" y="436.2" width="3" height="1" fill="#6e7079"/>
<rect x="642.3" y="416.4" width="3" height="1" fill="#6e7079"/>
<rect x="642.3" y="396.7" width="3" height="1" fill="#6e7079"/>
<rect x="642.3" y="376.9" width="3" height="1" fill="#6e7079"/>
<rect x="642.3" y="337.5" width="3" height="1" fill="#6e7079"/>
<rect x="642.3" y="317.7" width="3" height="1" fill="#6e7079"/>
<rect x="642.3" y="298.0" width="3" height="1" fill="#6e7079"/>
<rect x="642.3" y="278.2" width="3" height="1" fill="#6e7079"/>
<polygon points="661.0,850.9 661.0,745.8 692.9,703.0 724.8,667.8 756.7,463.6 788.6,493.1 820.5,416.7 852.4,504.0 884.3,334.8 916.2,406.4 948.1,459.5 980.0,529.4 1011.9,499.3 1043.8,680.5 1075.7,657.5 1107.6,701.4 1139.5,702.3 1171.5,606.3 1203.4,618.8 1235.3,725.0 1267.2,764.9 1299.1,794.9 1331.0,723.2 1362.9,757.4 1394.8,784.2 1426.7,761.4 1458.6,761.0 1490.5,796.3 1522.4,824.8 1554.3,845.1 1586.2,842.3 1618.1,845.1 1650.0,826.9 1650.0,850.9" fill="#1fa8c9" fill-opacity=".2"/>
<polyline points="661.0,745.8 692.9,703.0 724.8,667.8 756.7,463.6 788.6,493.1 820.5,416.7 852.4,504.0 884.3,334.8 916.2,406.4 948.1,459.5 980.0,529.4 1011.9,499.3 1043.8,680.5 1075.7,657.5 1107.6,701.4 1139.5,702.3 1171.5,606.3 1203.4,618.8 1235.3,725.0 1267.2,764.9 1299.1,794.9 1331.0,723.2 1362.9,757.4 1394.8,784.2 1426.7,761.4 1458.6,761.0 1490.5,796.3 1522.4,824.8 1554.3,845.1 1586.2,842.3 1618.1,845.1 1650.0,826.9" fill="none" stroke="#1fa8c9" stroke-width="1.8" stroke-linejoin="bevel"/>
<rect x="644.8" y="850.35" width="1021.7" height="1.1" fill="#6e7079" fill-opacity=".85"/>
<rect x="645" y="851" width="1" height="4.7" fill="#6e7079" fill-opacity=".8"/>
<rect x="805" y="851" width="1" height="4.7" fill="#6e7079" fill-opacity=".8"/>
<rect x="964" y="851" width="1" height="4.7" fill="#6e7079" fill-opacity=".8"/>
<rect x="1124" y="851" width="1" height="4.7" fill="#6e7079" fill-opacity=".8"/>
<rect x="1283" y="851" width="1" height="4.7" fill="#6e7079" fill-opacity=".8"/>
<rect x="1443" y="851" width="1" height="4.7" fill="#6e7079" fill-opacity=".8"/>
<rect x="1602" y="851" width="1" height="4.7" fill="#6e7079" fill-opacity=".8"/>
<rect x="1665.5" y="851" width="1" height="4.7" fill="#6e7079" fill-opacity=".8"/>
<text x="638" y="261.1" text-anchor="end" font-size="10.5" fill="#6e7079">1.2M</text>
<text x="638" y="360.0" text-anchor="end" font-size="10.5" fill="#6e7079">1M</text>
<text x="638" y="458.8" text-anchor="end" font-size="10.5" fill="#6e7079">800k</text>
<text x="638" y="557.6" text-anchor="end" font-size="10.5" fill="#6e7079">600k</text>
<text x="638" y="656.5" text-anchor="end" font-size="10.5" fill="#6e7079">400k</text>
<text x="638" y="755.4" text-anchor="end" font-size="10.5" fill="#6e7079">200k</text>
<text x="638" y="854.2" text-anchor="end" font-size="10.5" fill="#6e7079">0</text>
<text x="661.0" y="864" text-anchor="middle" font-size="10.5" fill="#6e7079">6.03</text>
<text x="820.5" y="864" text-anchor="middle" font-size="10.5" fill="#6e7079">9.91</text>
<text x="980.0" y="864" text-anchor="middle" font-size="10.5" fill="#6e7079">13.49</text>
<text x="1139.5" y="864" text-anchor="middle" font-size="10.5" fill="#6e7079">16.29</text>
<text x="1299.1" y="864" text-anchor="middle" font-size="10.5" fill="#6e7079">18.64</text>
<text x="1458.6" y="864" text-anchor="middle" font-size="10.5" fill="#6e7079">20.89</text>
<text x="1618.1" y="864" text-anchor="middle" font-size="10.5" fill="#6e7079">23.13</text>
<rect x="1501.6" y="233.2" width="22.4" height="1.7" fill="#1fa8c9" fill-opacity=".75"/>
<circle cx="1513" cy="234" r="5" fill="#fff" stroke="#1fa8c9" stroke-width="1.9"/>
<text x="1528.7" y="237.2" font-size="10.6" fill="#333">SUM(loan_amnt)</text>
<rect x="1626.3" y="227.9" width="21" height="11.8" rx="5.9" fill="#fff" stroke="#999" stroke-width="1"/>
<text x="1636.9" y="237" text-anchor="middle" font-size="9.8" fill="#999">All</text>
<rect x="1655.2" y="227.9" width="23" height="11.8" rx="5.9" fill="#fff" stroke="#999" stroke-width="1"/>
<text x="1666.8" y="237" text-anchor="middle" font-size="9.8" fill="#999">Inv</text>
</svg>
<div class="abs up" style="left:567.5px;top:906.8px;font-size:11.5px;letter-spacing:-.85px">RESULTS</div>
<div class="abs up" style="left:642.5px;top:906.8px;font-size:11.5px;letter-spacing:-.85px">SAMPLES</div>
<div class="abs" style="left:567px;top:933px;width:1130px;height:1px;background:#f0f0f0"></div>
<svg class="abs" style="left:1681px;top:906.5px" width="10" height="6" viewBox="0 0 10 6" fill="none" stroke="#555" stroke-width="1.4"><path d="M.6 .6 L5 5 L9.4 .6"/></svg>


</body>
</html>
